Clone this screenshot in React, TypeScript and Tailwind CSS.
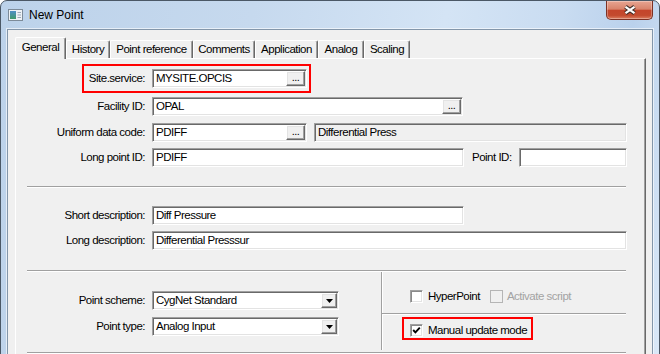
import React from "react";

const sunken =
  "box-border border border-t-[#a0a0a0] border-l-[#a0a0a0] border-b-white border-r-white shadow-[inset_1px_1px_0_#696969,inset_-1px_-1px_0_#e3e3e3]";
const raised =
  "box-border border border-t-white border-l-white border-b-[#696969] border-r-[#696969] shadow-[inset_-1px_-1px_0_#a0a0a0,inset_1px_1px_0_#e3e3e3] bg-[#f0f0f0]";

function Field({
  w,
  value,
  button,
  readOnly,
}: {
  w: string;
  value: string;
  button?: boolean;
  readOnly?: boolean;
}) {
  return (
    <div
      className={`${sunken} ${w} h-[19px] flex items-stretch p-[1px] ${
        readOnly ? "bg-[#f0f0f0]" : "bg-white"
      }`}
    >
      <div className="flex-1 flex items-center pl-[2px] whitespace-nowrap overflow-hidden">
        {value}
      </div>
      {button && (
        <div className={`${raised} w-[19px] flex items-end justify-center pb-[2px] leading-none text-[11px]`}>
          ...
        </div>
      )}
    </div>
  );
}

function Combo({ value }: { value: string }) {
  return (
    <div className={`${sunken} w-[187px] h-[19px] flex items-stretch p-[1px] bg-white`}>
      <div className="flex-1 flex items-center pl-[2px] whitespace-nowrap">{value}</div>
      <div className={`${raised} w-[16px] flex items-center justify-center`}>
        <svg width="7" height="4" viewBox="0 0 7 4">
          <polygon points="0,0 7,0 3.5,4" fill="#000" />
        </svg>
      </div>
    </div>
  );
}

function Check({ checked, disabled }: { checked?: boolean; disabled?: boolean }) {
  return (
    <div
      className={`box-border w-[13px] h-[13px] border ${
        disabled
          ? "border-[#b5b5b5] bg-[#f0f0f0]"
          : "border-t-[#a0a0a0] border-l-[#a0a0a0] border-b-white border-r-white shadow-[inset_1px_1px_0_#8a8a8a,inset_-1px_-1px_0_#e3e3e3] bg-white"
      } flex items-center justify-center shrink-0`}
    >
      {checked && (
        <svg width="9" height="9" viewBox="0 0 9 9">
          <polyline points="1.2,4 3.4,6.3 7.8,1.6" fill="none" stroke="#000" strokeWidth="1.9" />
        </svg>
      )}
    </div>
  );
}

function Sep({ w = "w-[599px]" }: { w?: string }) {
  return <div className={`box-border h-[2px] border-t border-t-[#a0a0a0] border-b border-b-white ${w}`} />;
}

function Tab({ label, w, selected }: { label: string; w: string; selected?: boolean }) {
  return (
    <div
      className={`box-border ${w} ${
        selected ? "h-[22px] -mb-[1px] relative z-10 pb-[2px]" : "h-[18px]"
      } border-t border-l border-t-white border-l-white border-r border-r-[#696969] shadow-[inset_-1px_0_0_#a0a0a0] rounded-tl-[2px] rounded-tr-[2px] bg-[#f0f0f0] flex items-center justify-center whitespace-nowrap`}
    >
      {label}
    </div>
  );
}

function Label({ children }: { children: React.ReactNode }) {
  return <div className="w-[118px] shrink-0 text-right whitespace-nowrap">{children}</div>;
}

export default function App() {
  return (
    <div className="w-[660px] h-[354px] overflow-hidden bg-white font-['Liberation_Sans',Arial,sans-serif] text-[11.5px] tracking-[-0.5px] text-black">
      <div className="relative box-border flex flex-col w-[660px] h-[370px] rounded-t-[7px] border border-[#4b5866] bg-[linear-gradient(100deg,#bcd2ea_0%,#c6d9ee_35%,#d4e4f5_62%,#c9dcf1_78%,#bad1ec_88%,#dbe9f8_100%)]">
        {/* Title bar */}
        <div className="h-[28px] shrink-0 flex items-center pl-[7px] pb-[1px]">
          <svg width="15" height="12" viewBox="0 0 15 12">
            <defs>
              <linearGradient id="ig" x1="0" y1="0" x2="0" y2="1">
                <stop offset="0" stopColor="#4e8fc7" />
                <stop offset="1" stopColor="#3e9a6a" />
              </linearGradient>
            </defs>
            <rect x="0.5" y="0.5" width="14" height="11" fill="#eef2f6" stroke="#7d8b99" />
            <rect x="2" y="2" width="6" height="8" fill="url(#ig)" />
            <rect x="9.5" y="3" width="3.5" height="1" fill="#9aa8b6" />
            <rect x="9.5" y="5.5" width="3.5" height="1" fill="#9aa8b6" />
            <rect x="9.5" y="8" width="3.5" height="1" fill="#9aa8b6" />
          </svg>
          <span className="ml-[6px] text-[12px] tracking-normal">New Point</span>
        </div>

        {/* Close button */}
        <div className="absolute top-0 right-[6px] box-border w-[47px] h-[19px] rounded-b-[5px] border border-t-0 border-[#7d3124] bg-[linear-gradient(180deg,#e8a592_0%,#d9836b_45%,#c4452b_52%,#c34a2e_80%,#dc7f62_100%)] shadow-[inset_0_0_0_1px_rgba(255,255,255,0.3)] flex items-center justify-center">
          <svg width="14" height="10" viewBox="0 0 14 10">
            <path d="M2.5 1.8 L11.5 8.2 M11.5 1.8 L2.5 8.2" stroke="#3d2c27" strokeWidth="4.2" />
            <path d="M2.5 1.8 L11.5 8.2 M11.5 1.8 L2.5 8.2" stroke="#ffffff" strokeWidth="2.2" />
          </svg>
        </div>

        {/* Client area */}
        <div className="flex-1 box-border ml-[6px] mr-[6px] border border-[#8396aa] bg-[#f0f0f0] flex flex-col pt-[7px] pl-[7px] pr-[6px] shadow-[0_0_0_1px_rgba(255,255,255,0.6)]">
          {/* Tabs */}
          <div className="flex items-end h-[21px] shrink-0">
            <Tab label="General" w="w-[51px]" selected />
            <Tab label="History" w="w-[44px]" />
            <Tab label="Point reference" w="w-[83px]" />
            <Tab label="Comments" w="w-[62px]" />
            <Tab label="Application" w="w-[63px]" />
            <Tab label="Analog" w="w-[46px]" />
            <Tab label="Scaling" w="w-[46px]" />
          </div>

          {/* Panel */}
          <div className="flex-1 box-border border-t border-l border-t-white border-l-white border-r border-r-[#696969] shadow-[inset_-1px_0_0_#a0a0a0] bg-[#f0f0f0] pt-[10px] pl-[11px] flex flex-col">
            {/* Row 1 */}
            <div className="relative flex items-center h-[19px]">
              <Label>Site.service:</Label>
              <div className="ml-[7px]">
                <Field w="w-[155px]" value="MYSITE.OPCIS" button />
              </div>
              <div className="absolute left-[55px] top-[-5px] w-[229px] h-[29px] border-2 border-[#ff0000] box-border" />
            </div>
            {/* Row 2 */}
            <div className="flex items-center h-[19px] mt-[9px]">
              <Label>Facility ID:</Label>
              <div className="ml-[7px]">
                <Field w="w-[311px]" value="OPAL" button />
              </div>
            </div>
            {/* Row 3 */}
            <div className="flex items-center h-[19px] mt-[7px]">
              <Label>Uniform data code:</Label>
              <div className="ml-[7px]">
                <Field w="w-[155px]" value="PDIFF" button />
              </div>
              <div className="ml-[7px]">
                <Field w="w-[313px]" value="Differential Press" readOnly />
              </div>
            </div>
            {/* Row 4 */}
            <div className="flex items-center h-[19px] mt-[6px]">
              <Label>Long point ID:</Label>
              <div className="ml-[7px]">
                <Field w="w-[312px]" value="PDIFF" />
              </div>
              <div className="ml-[8px] w-[47px] whitespace-nowrap">Point ID:</div>
              <Field w="w-[108px]" value="" />
            </div>

            <div className="mt-[19px]">
              <Sep />
            </div>

            <div className="flex items-center h-[19px] mt-[18px]">
              <Label>Short description:</Label>
              <div className="ml-[7px]">
                <Field w="w-[312px]" value="Diff Pressure" />
              </div>
            </div>
            <div className="flex items-center h-[19px] mt-[6px]">
              <Label>Long description:</Label>
              <div className="ml-[7px]">
                <Field w="w-[475px]" value="Differential Presssur" />
              </div>
            </div>

            <div className="mt-[20px]">
              <Sep />
            </div>

            {/* Bottom section */}
            <div className="flex h-[80px] shrink-0">
              <div className="w-[354px] pt-[19px]">
                <div className="flex items-center h-[19px]">
                  <Label>Point scheme:</Label>
                  <div className="ml-[7px]">
                    <Combo value="CygNet Standard" />
                  </div>
                </div>
                <div className="flex items-center h-[19px] mt-[7px]">
                  <Label>Point type:</Label>
                  <div className="ml-[7px]">
                    <Combo value="Analog Input" />
                  </div>
                </div>
              </div>
              <div className="w-[245px] box-border h-[78px] border-l border-l-[#a0a0a0] shadow-[inset_1px_0_0_#ffffff] flex flex-col">
                <div className="h-[41px] pt-[18px] pl-[28px]">
                  <div className="flex items-center h-[13px]">
                    <Check />
                    <span className="ml-[5px] whitespace-nowrap">HyperPoint</span>
                    <div className="ml-[10px]">
                      <Check disabled />
                    </div>
                    <span className="ml-[4px] whitespace-nowrap text-[#a3a3a3]">Activate script</span>
                  </div>
                </div>
                <Sep w="w-full" />
                <div className="pt-[9px] pl-[28px]">
                  <div className="relative flex items-center h-[13px]">
                    <Check checked />
                    <span className="ml-[5px] whitespace-nowrap">Manual update mode</span>
                    <div className="absolute left-[-8px] top-[-7px] w-[131px] h-[23px] border-2 border-[#ff0000] box-border" />
                  </div>
                </div>
              </div>
            </div>
            <Sep />
          </div>
        </div>
      </div>
    </div>
  );
}
